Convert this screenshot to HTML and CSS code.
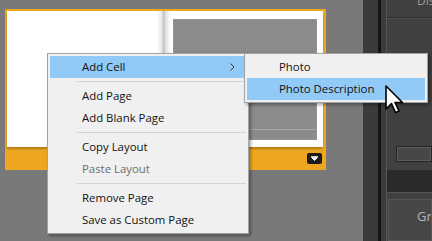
FILE: index.html
```html
<!DOCTYPE html>
<html lang="en">
<head>
    <meta charset="UTF-8">
    <meta name="viewport" content="width=device-width, initial-scale=1.0">
    <title>Book Layout</title>
    <link rel="stylesheet" href="styles.css">
</head>
<body>
    <main class="workspace">
        <div class="spread">
            <div class="pages">
                <div class="page page-left"></div>
                <div class="page page-right">
                    <div class="photo-cell">
                        <div class="text-cell"></div>
                    </div>
                </div>
            </div>
            <div class="spread-foot">
                <span class="spread-menu">
                    <svg width="7" height="5" viewBox="0 0 7 5"><path d="M0 0.5H7M0.5 1.5H6.5L3.5 4.5Z" fill="#fff" stroke="#fff" stroke-width="0.8"/></svg>
                </span>
            </div>
        </div>
    </main>

    <aside class="sidebar">
        <div class="gutter"></div>
        <div class="split"></div>
        <div class="gutter gutter-narrow"></div>
        <div class="panel">
            <div class="panel-head"><span>Display</span></div>
            <div class="panel-box">
                <div class="field"></div>
            </div>
            <div class="panel-band"></div>
            <div class="panel-box panel-box-last">
                <div class="panel-inner"><span>Grid</span></div>
            </div>
        </div>
    </aside>

    <!-- context menu -->
    <ul class="menu context-menu">
        <li class="item active">Add Cell
            <svg class="chevron" width="5" height="8" viewBox="0 0 5 8"><path d="M0.5 0.5L4 4L0.5 7.5" fill="none" stroke="#333" stroke-width="1"/></svg>
        </li>
        <li class="sep"></li>
        <li class="item">Add Page</li>
        <li class="item">Add Blank Page</li>
        <li class="sep"></li>
        <li class="item">Copy Layout</li>
        <li class="item disabled">Paste Layout</li>
        <li class="sep"></li>
        <li class="item">Remove Page</li>
        <li class="item">Save as Custom Page</li>
    </ul>

    <ul class="menu submenu">
        <li class="item">Photo</li>
        <li class="item active">Photo Description</li>
    </ul>

    <svg class="cursor" width="20" height="31" viewBox="0 0 20 31">
        <path d="M1 1V24L6.5 18.5L10.5 27.5L14 26L10 17.5H17.5Z" fill="#fff" stroke="#000" stroke-width="1.6" stroke-linejoin="round"/>
    </svg>
</body>
</html>
```

FILE: styles.css
```css
/* Base */
body {
    margin: 0;
    width: 432px;
    height: 241px;
    overflow: hidden;
    position: relative;
    display: flex;
    background-color: #797979;
    font-family: 'Open Sans', 'Noto Sans', sans-serif;
    font-size: 11.4px;
    color: #111;
}

/* Workspace with the page spread */
.workspace {
    flex: 0 0 363px;
    padding: 9px 0 0 5px;
    box-sizing: border-box;
}

.spread {
    width: 321px;
    padding: 2px 3px 0 2px;
    box-sizing: border-box;
    background-color: #eda620;
}

.pages {
    display: flex;
    height: 136px;
    box-shadow: 0 2px 2px rgba(0, 0, 0, 0.25);
}

.page {
    background-color: #fff;
}

.page-left {
    width: 156px;
    background: linear-gradient(to right, #fff 0, #fff 150px, #e6e6e6 155px, #cfcfcf 156px);
}

.page-right {
    flex: 1;
    display: flex;
    padding: 8px 6px 7px 10px;
    background: linear-gradient(to right, #bdbdbd 0, #e4e4e4 3px, #fafafa 7px, #fff 9px);
}

.photo-cell {
    flex: 1;
    display: flex;
    flex-direction: column;
    justify-content: flex-end;
    background-color: #8b8b8b;
    border: 1px solid #939393;
}

.text-cell {
    height: 9px;
    border-top: 1px solid #a6a6a6;
}

.spread-foot {
    height: 23px;
    display: flex;
    justify-content: flex-end;
    align-items: flex-start;
    padding-top: 6px;
    box-sizing: border-box;
}

.spread-menu {
    width: 15px;
    height: 11px;
    margin-right: 1px;
    display: flex;
    align-items: center;
    justify-content: center;
    background-color: #1c1c1c;
    border-radius: 2px;
}

/* Right side panel */
.sidebar {
    flex: 1;
    min-width: 0;
    overflow: hidden;
    display: flex;
    background-color: #3b3b3b;
}

.gutter {
    flex: 0 0 15px;
    background-color: #3b3b3b;
}

.gutter-narrow {
    flex-basis: 5px;
}

.split {
    flex: 0 0 3px;
    background-color: #141414;
}

.panel {
    flex: 1;
    min-width: 0;
    display: flex;
    flex-direction: column;
    border-left: 1px solid #575757;
    background-color: #404040;
}

.panel-head {
    height: 17px;
    border-bottom: 1px solid #2c2c2c;
    overflow: hidden;
}

.panel-head span {
    display: block;
    margin: -8px 0 0 30px;
    color: #9a9a9a;
    font-size: 12px;
    white-space: nowrap;
}

.panel-box {
    flex: 1;
    display: flex;
    align-items: flex-end;
    padding: 0 0 8px 9px;
    border-top: 1px solid #4d4d4d;
}

.field {
    flex: 1;
    height: 14px;
    border: 1px solid #242424;
    box-shadow: inset 0 0 0 1px #5c5c5c;
    background-color: #474747;
}

.panel-band {
    height: 22px;
    background-color: #2a2a2a;
}

.panel-box-last {
    flex: 0 0 41px;
    align-items: flex-start;
    padding: 6px 0 0 1px;
    border-top: 1px solid #555;
}

.panel-inner {
    flex: 1;
    height: 40px;
    border: 1px solid #575757;
    background-color: #474747;
    overflow: hidden;
}

.panel-inner span {
    display: block;
    margin: 7px 0 0 28px;
    color: #b4b4b4;
    font-size: 13px;
    white-space: nowrap;
}

/* Menus */
.menu {
    position: absolute;
    top: 53px;
    margin: 0;
    padding: 2px;
    list-style: none;
    background-color: #f0f0f0;
    border: 1px solid #a3a3a3;
    box-shadow: 2px 2px 3px rgba(0, 0, 0, 0.35);
}

.context-menu {
    left: 47px;
    width: 196px;
}

.submenu {
    left: 244px;
    width: 178px;
}

.item {
    position: relative;
    height: 22px;
    line-height: 22px;
    padding-left: 32px;
    white-space: nowrap;
}

.item.active {
    background-color: #91c9f7;
}

.item.disabled {
    color: #6d6d6d;
}

.chevron {
    position: absolute;
    right: 11px;
    top: 7px;
}

.sep {
    height: 3px;
    margin: 0 0 3px 27px;
    border-bottom: 1px solid #d5d5d5;
}

.cursor {
    position: absolute;
    left: 385px;
    top: 85px;
}
```
